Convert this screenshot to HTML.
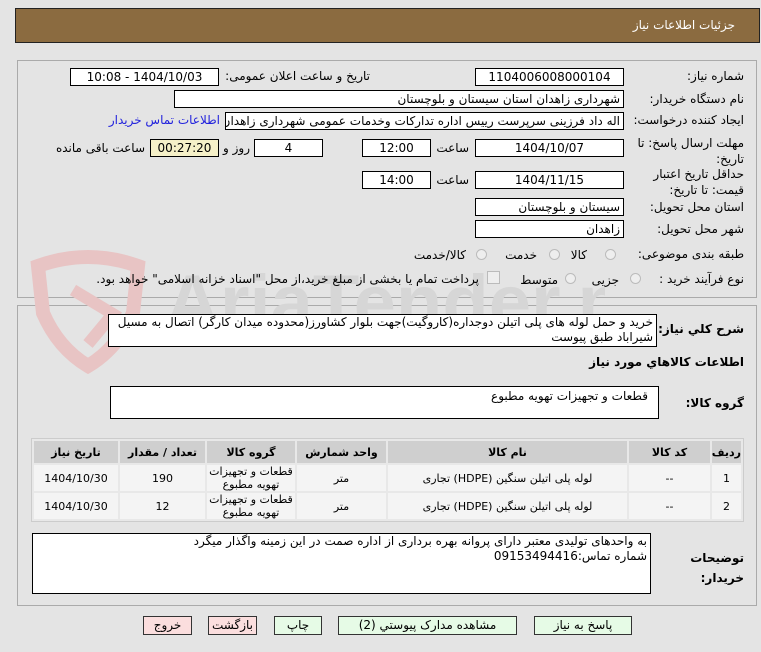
<!DOCTYPE html>
<html><head><meta charset="utf-8"><style>
body{margin:0;width:761px;height:652px;background:#e4e4e4;font-family:"DejaVu Sans","Liberation Sans",sans-serif;font-size:11px;color:#000;position:relative;overflow:hidden;direction:rtl}
.a{position:absolute;white-space:nowrap}
.box{position:absolute;background:#fff;border:1px solid #000;box-sizing:border-box;text-align:center;font-size:12px;line-height:16px;overflow:hidden;white-space:nowrap}
.l{position:absolute;white-space:nowrap;font-size:12px}
.rad{position:absolute;width:11px;height:11px;border-radius:50%;border:1px solid #bbb;background:#eee;box-sizing:border-box}
.btn{position:absolute;height:19px;border:1px solid #333;box-sizing:border-box;background:#e6fbe6;text-align:center;font-size:12px;line-height:17px}
table{position:absolute;left:31px;top:438px;width:713px;border-collapse:separate;border-spacing:2px;border:1px solid #ccc;background:#e8e8e8;font-size:11px;table-layout:fixed}
th{background:#cfcfcf;height:22px;font-weight:bold;padding:0}
td{background:#f4f4f4;text-align:center;height:26px;line-height:13px;padding:0;overflow:hidden}
</style></head><body>
<div class="a" style="left:15px;top:8px;width:745px;height:35px;background:#8b6b40;border:1px solid #222;box-sizing:border-box"></div>
<div class="a" style="right:26px;top:18px;color:#fff;font-size:12px">جزئیات اطلاعات نیاز</div>

<div class="a" style="left:17px;top:60px;width:740px;height:238px;border:1px solid #aaa;box-sizing:border-box"></div>
<div class="a" style="left:17px;top:305px;width:740px;height:301px;border:1px solid #aaa;box-sizing:border-box"></div>

<!-- watermark -->
<svg class="a" style="left:18px;top:248px" width="140" height="130" viewBox="0 0 140 130"><path d="M20 18 Q70 0 120 18 L115 65 Q100 100 70 118 Q40 100 25 65 Z" fill="none" stroke="#e8c4c4" stroke-width="14"/><path d="M55 42 L95 66 L70 96" fill="none" stroke="#e8c4c4" stroke-width="12"/></svg>
<div class="a" style="left:165px;top:255px;width:440px;height:95px;overflow:hidden;font-size:76px;line-height:95px;font-family:'Liberation Sans',sans-serif;font-weight:bold;color:#d6d6d6;direction:ltr">AriaTender.net</div>

<div class="l" style="right:17px;top:69px">شماره نیاز:</div>
<div class="box" style="left:475px;top:68px;width:149px;height:18px">1104006008000104</div>
<div class="l" style="right:391px;top:69px">تاریخ و ساعت اعلان عمومی:</div>
<div class="box" style="left:70px;top:68px;width:149px;height:18px">1404/10/03 - 10:08</div>

<div class="l" style="right:17px;top:92px">نام دستگاه خریدار:</div>
<div class="box" style="left:174px;top:90px;width:450px;height:18px;text-align:right;padding-right:3px">شهرداری زاهدان استان سیستان و بلوچستان</div>

<div class="l" style="right:17px;top:113px">ایجاد کننده درخواست:</div>
<div class="box" style="left:225px;top:112px;width:399px;height:18px;text-align:right;padding-right:3px">اله داد فرزینی سرپرست رییس اداره تدارکات وخدمات عمومی شهرداری زاهدان ا</div>
<div class="l" style="right:541px;top:113px;color:#2222dd">اطلاعات تماس خریدار</div>

<div class="l" style="right:17px;top:135px;line-height:16px;text-align:right">مهلت ارسال پاسخ: تا<br>تاریخ:</div>
<div class="box" style="left:475px;top:139px;width:149px;height:18px">1404/10/07</div>
<div class="l" style="right:292px;top:141px">ساعت</div>
<div class="box" style="left:362px;top:139px;width:69px;height:18px">12:00</div>
<div class="box" style="left:254px;top:139px;width:69px;height:18px">4</div>
<div class="l" style="right:511px;top:141px">روز و</div>
<div class="box" style="left:150px;top:139px;width:69px;height:18px;background:#f5f0c8">00:27:20</div>
<div class="l" style="right:616px;top:141px">ساعت باقی مانده</div>

<div class="l" style="right:17px;top:166px;line-height:16px;text-align:right">حداقل تاریخ اعتبار<br>قیمت: تا تاریخ:</div>
<div class="box" style="left:475px;top:171px;width:149px;height:18px">1404/11/15</div>
<div class="l" style="right:292px;top:173px">ساعت</div>
<div class="box" style="left:362px;top:171px;width:69px;height:18px">14:00</div>

<div class="l" style="right:17px;top:200px">استان محل تحویل:</div>
<div class="box" style="left:475px;top:198px;width:149px;height:18px;text-align:right;padding-right:3px">سیستان و بلوچستان</div>
<div class="l" style="right:17px;top:222px">شهر محل تحویل:</div>
<div class="box" style="left:475px;top:220px;width:149px;height:18px;text-align:right;padding-right:3px">زاهدان</div>

<div class="l" style="right:17px;top:247px">طبقه بندی موضوعی:</div>
<div class="rad" style="left:605px;top:249px"></div><div class="l" style="right:174px;top:248px">کالا</div>
<div class="rad" style="left:549px;top:249px"></div><div class="l" style="right:224px;top:248px">خدمت</div>
<div class="rad" style="left:476px;top:249px"></div><div class="l" style="right:295px;top:248px">کالا/خدمت</div>

<div class="l" style="right:17px;top:272px">نوع فرآیند خرید :</div>
<div class="rad" style="left:630px;top:273px"></div><div class="l" style="right:142px;top:273px">جزیی</div>
<div class="rad" style="left:565px;top:273px"></div><div class="l" style="right:203px;top:273px">متوسط</div>
<div class="a" style="left:487px;top:271px;width:11px;height:11px;border:1px solid #bbb;background:#eee"></div>
<div class="l" style="right:282px;top:272px">پرداخت تمام یا بخشی از مبلغ خرید،از محل "اسناد خزانه اسلامی" خواهد بود.</div>

<div class="l" style="right:17px;top:322px;font-weight:bold">شرح کلي نیاز:</div>
<div class="box" style="left:108px;top:314px;width:549px;height:33px;text-align:right;padding:0 3px;white-space:normal;line-height:15px">خرید و حمل لوله های پلی اتیلن دوجداره(کاروگیت)جهت بلوار کشاورز(محدوده میدان کارگر) اتصال به مسیل شیراباد طبق پیوست</div>

<div class="l" style="right:17px;top:355px;font-weight:bold">اطلاعات کالاهاي مورد نیاز</div>

<div class="l" style="right:17px;top:396px;font-weight:bold">گروه کالا:</div>
<div class="box" style="left:110px;top:386px;width:549px;height:33px;text-align:right;padding-right:10px;line-height:18px">قطعات و تجهیزات تهویه مطبوع</div>

<table>
<colgroup><col style="width:29px"><col style="width:81px"><col style="width:239px"><col style="width:89px"><col style="width:88px"><col style="width:85px"><col></colgroup>
<tr><th>ردیف</th><th>کد کالا</th><th>نام کالا</th><th>واحد شمارش</th><th>گروه کالا</th><th>تعداد / مقدار</th><th>تاریخ نیاز</th></tr>
<tr><td>1</td><td>--</td><td>لوله پلی اتیلن سنگین (HDPE) تجاری</td><td>متر</td><td>قطعات و تجهیزات<br>تهویه مطبوع</td><td>190</td><td>1404/10/30</td></tr>
<tr><td>2</td><td>--</td><td>لوله پلی اتیلن سنگین (HDPE) تجاری</td><td>متر</td><td>قطعات و تجهیزات<br>تهویه مطبوع</td><td>12</td><td>1404/10/30</td></tr>
</table>

<div class="l" style="right:17px;top:548px;font-weight:bold;line-height:20px;text-align:right">توضیحات<br>خریدار:</div>
<div class="box" style="left:32px;top:533px;width:619px;height:61px;text-align:right;padding-right:3px;line-height:15px">به واحدهای تولیدی معتبر دارای پروانه بهره برداری از اداره صمت در این زمینه واگذار میگرد<br>شماره تماس:09153494416</div>

<div class="btn" style="left:534px;top:616px;width:98px">پاسخ به نیاز</div>
<div class="btn" style="left:338px;top:616px;width:179px">مشاهده مدارک پیوستي (2)</div>
<div class="btn" style="left:274px;top:616px;width:48px">چاپ</div>
<div class="btn" style="left:208px;top:616px;width:49px;background:#fbdede">بازگشت</div>
<div class="btn" style="left:143px;top:616px;width:49px;background:#fbdede">خروج</div>
</body></html>
